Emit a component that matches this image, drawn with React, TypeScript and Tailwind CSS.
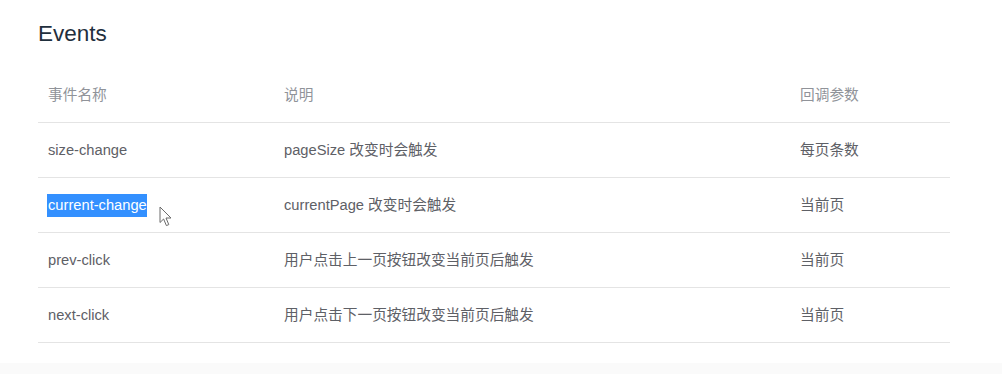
import React from "react";

type Row = { name: string; desc: string; param: string };

const rows: Row[] = [
  { name: "size-change", desc: "pageSize 改变时会触发", param: "每页条数" },
  { name: "current-change", desc: "currentPage 改变时会触发", param: "当前页" },
  { name: "prev-click", desc: "用户点击上一页按钮改变当前页后触发", param: "当前页" },
  { name: "next-click", desc: "用户点击下一页按钮改变当前页后触发", param: "当前页" },
];

const font = {
  fontFamily: '"Liberation Sans", Arial, "Noto Sans CJK SC", sans-serif',
};

function Pointer() {
  return (
    <svg
      className="absolute left-[121px] top-[12px]"
      width="13"
      height="21"
      viewBox="0 0 13 21"
    >
      <path
        d="M1 1 L1 16.5 L4.6 13 L7.4 19.6 L9.8 18.6 L7 12 L12 12 Z"
        fill="#ffffff"
        stroke="#6b6b6b"
        strokeWidth="1"
        strokeLinejoin="round"
      />
    </svg>
  );
}

export default function App() {
  return (
    <div className="w-[1002px] h-[374px] bg-white flex flex-col" style={font}>
      <div className="flex-1 pl-[38px] pt-[20px]">
        <h3 className="text-[22.5px] leading-[28px] text-[#1f2f3d] font-normal mb-[20px]">
          Events
        </h3>
        <div className="w-[912px] text-[14.7px] text-[#5e6066]">
          <div className="grid grid-cols-[236px_516px_160px] h-[55px] items-center border-b border-[#e4e4e4] text-[#909399]">
            <div className="pl-[10px]">事件名称</div>
            <div className="pl-[10px]">说明</div>
            <div className="pl-[10px]">回调参数</div>
          </div>
          {rows.map((r) => (
            <div
              key={r.name}
              className="grid grid-cols-[236px_516px_160px] h-[55px] items-center border-b border-[#e4e4e4]"
            >
              <div className="pl-[10px] relative">
                {r.name === "current-change" ? (
                  <>
                    <span className="-ml-px pl-px inline-block leading-[23px] bg-[#3390ff] text-white">
                      {r.name}
                    </span>
                    <Pointer />
                  </>
                ) : (
                  r.name
                )}
              </div>
              <div className="pl-[10px]">{r.desc}</div>
              <div className="pl-[10px]">{r.param}</div>
            </div>
          ))}
        </div>
      </div>
      <div className="h-[11px] bg-[#fafafa]" />
    </div>
  );
}
